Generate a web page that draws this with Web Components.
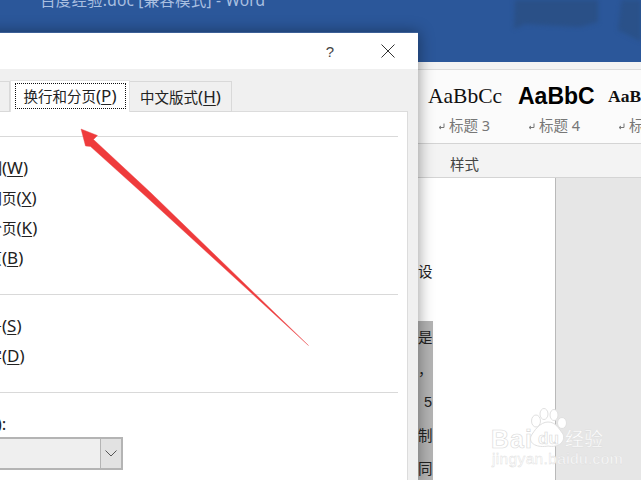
<!DOCTYPE html>
<html lang="zh">
<head>
<meta charset="utf-8">
<style>
html, body { margin: 0; padding: 0; width: 641px; height: 480px; overflow: hidden; background: #fff; }
body { position: relative; font-family: "Noto Sans", "Noto Sans CJK SC", sans-serif; }
</style>
</head>
<body>
<word-window>
	<title-bar>百度经验.doc [兼容模式] - Word</title-bar>
	<style-ribbon group="样式">
		<style-sample label="标题 3" kind="serif">AaBbCc</style-sample>
		<style-sample label="标题 4" kind="sans">AaBbC</style-sample>
		<style-sample label="标题 5" kind="small">AaB</style-sample>
	</style-ribbon>
	<doc-area></doc-area>
</word-window>
<para-dialog></para-dialog>
<red-arrow></red-arrow>
<baidu-mark></baidu-mark>

<script>
//#region HELPERS
function define(name, html, init) {
	window.customElements.define(
		name,
		class extends HTMLElement {
			constructor() {
				super();
				this.attachShadow({mode: "open"}).innerHTML = html;
				if (init) init(this);
			}
		}
	);
}
//#endregion HELPERS

//#region WINDOW
define("word-window", /* html */ `
<style>
:host { display: flex; flex-direction: column; width: 641px; height: 480px; }
</style>
<slot></slot>`);

define("title-bar", /* html */ `
<style>
:host {
	display: block;
	position: relative;
	flex: none;
	height: 62px;
	background: #2b579a;
	overflow: hidden;
	box-sizing: border-box;
	padding-left: 40px;
	color: #a9bfe0;
	font-size: 15.5px;
	line-height: 20px;
}
.text { position: relative; margin-top: -10px; white-space: nowrap; letter-spacing: .2px; }
svg { position: absolute; left: 0; top: 0; filter: blur(2px); }
</style>
<svg width="641" height="62">
	<path d="M515 -5H598V22L580 27L525 24L514 29Z" fill="#2a5087"/>
	<path d="M618 30L646 44V-5H622Z" fill="#2a5189"/>
</svg>
<div class="text"><slot></slot></div>`);

define("style-ribbon", /* html */ `
<style>
:host {
	display: block;
	flex: none;
	height: 116px;
	background: #f3f3f3;
	box-sizing: border-box;
	border-bottom: 1px solid #d4d4d4;
	padding-left: 418px;
	color: #444;
}
.top { height: 7px; border-bottom: 1px solid #dcdcdc; margin-left: -418px; }
.gallery {
	display: flex;
	height: 73px;
	background: #fbfbfb;
	border-bottom: 1px solid #d4d4d4;
	margin-left: -418px;
	padding-left: 418px;
	overflow: hidden;
}
.group { padding: 6px 0 0 32px; font-size: 14.5px; line-height: 28px; }
</style>
<div class="top"></div>
<div class="gallery"><slot></slot></div>
<div class="group"></div>`, (el) => {
	el.shadowRoot.querySelector(".group").textContent = el.getAttribute("group");
});

define("style-sample", /* html */ `
<style>
:host { display: block; flex: none; width: 90px; }
.sample {
	height: 39px;
	margin-top: 6px;
	padding-left: 10px;
	line-height: 40px;
	white-space: nowrap;
	color: #111;
	font-family: "Liberation Serif", serif;
	font-size: 21.5px;
}
:host([kind="sans"]) .sample { font-family: "Liberation Sans", sans-serif; font-weight: bold; font-size: 23px; color: #000; }
:host([kind="small"]) .sample { font-weight: bold; font-size: 17.5px; }
.label {
	display: flex;
	align-items: center;
	padding-left: 20px;
	font-size: 14.5px;
	line-height: 20px;
	color: #777;
	white-space: nowrap;
}
svg { margin-right: 4px; margin-top: 3px; flex: none; }
</style>
<div class="sample"><slot></slot></div>
<div class="label">
	<svg width="7" height="7" viewBox="0 0 7 7"><path d="M6 .5V4.5H1.5M3 3L1 4.5L3 6" fill="none" stroke="#777"/></svg>
	<span></span>
</div>`, (el) => {
	el.shadowRoot.querySelector("span").textContent = el.getAttribute("label");
});

define("doc-area", /* html */ `
<style>
:host { display: flex; flex: 1; background: #e6e6e6; min-height: 0; overflow: hidden; }
.page {
	width: 137px;
	margin-left: 418px;
	background: #fff;
	border-right: 1px solid #b9b9b9;
	padding-top: 77px;
	flex: none;
}
.line {
	width: 15px;
	height: 32.8px;
	line-height: 32.8px;
	font-family: "Noto Sans CJK SC", sans-serif;
	font-size: 14.5px;
	color: #222;
	white-space: nowrap;
	overflow: hidden;
}
.sel { background: #b4b4b4; }
.r { text-align: right; padding-right: 1px; width: 14px; font-family: "Liberation Sans", sans-serif; }
</style>
<div class="page">
	<div class="line">设</div>
	<div class="line"></div>
	<div class="line sel">是</div>
	<div class="line sel">，</div>
	<div class="line sel r">5</div>
	<div class="line sel">制</div>
	<div class="line sel">同</div>
</div>`);
//#endregion WINDOW

//#region DIALOG
define("para-dialog", /* html */ `
<style>
:host {
	display: block;
	position: absolute;
	left: -120px;
	top: 32px;
	width: 538px;
	height: 448px;
	background: #f0f0f0;
	box-shadow: 1px 0 14px rgba(0, 0, 0, .38);
	border-top: 1px solid #3b5f96;
	box-sizing: border-box;
	color: #222;
	font-size: 14.5px;
}
.head {
	display: flex;
	justify-content: flex-end;
	align-items: center;
	height: 36px;
	background: #fff;
	padding-right: 23px;
	gap: 47px;
	color: #444;
	font-size: 15px;
	font-family: "Liberation Sans", sans-serif;
}
.tabs { display: flex; align-items: flex-end; height: 31px; margin: 12px 0 -1px 20px; position: relative; }
.panel {
	margin: 0 10px 0 20px;
	height: 369px;
	background: #fff;
	border: 1px solid #dcdcdc;
	border-bottom: 0;
	padding: 24px 9px 0 0;
	box-sizing: border-box;
}
hr { border: 0; border-top: 1px solid #d9d9d9; margin: 0; }
.group { padding: 16px 0 21px 43px; }
.field { padding: 21px 0 0 27px; }
.field label { display: block; height: 20px; line-height: 20px; white-space: nowrap; margin-left: -5px; }
.m { font-size: 17px; line-height: 1; }
u { text-underline-offset: 2px; }
.select {
	display: flex;
	justify-content: flex-end;
	width: 195px;
	height: 33px;
	margin-top: 3px;
	box-sizing: border-box;
	background: #efefef;
	border: 2px solid #b4b4b4;
}
.select div {
	display: flex;
	align-items: center;
	justify-content: center;
	width: 20px;
	background: #e2e2e2;
	border-left: 1px solid #b4b4b4;
}
</style>
<div class="head">
	<span>?</span>
	<svg width="14" height="14" viewBox="0 0 14 14"><path d="M.5 .5L13.5 13.5M13.5 .5L.5 13.5" stroke="#333" fill="none"/></svg>
</div>
<div class="tabs">
	<dialog-tab style="width:110px"></dialog-tab>
	<dialog-tab active style="width:120px">换行和分页<span class="m">(<u>P</u>)</span></dialog-tab>
	<dialog-tab style="width:102px">中文版式<span class="m">(<u>H</u>)</span></dialog-tab>
</div>
<div class="panel">
	<hr>
	<div class="group">
		<check-row>孤行控制<span class="m">(<u>W</u>)</span></check-row>
		<check-row>与下段同页<span class="m">(<u>X</u>)</span></check-row>
		<check-row>段中不分页<span class="m">(<u>K</u>)</span></check-row>
		<check-row>段前分页<span class="m">(<u>B</u>)</span></check-row>
	</div>
	<hr>
	<div class="group">
		<check-row>取消行号<span class="m">(<u>S</u>)</span></check-row>
		<check-row>取消断字<span class="m">(<u>D</u>)</span></check-row>
	</div>
	<hr>
	<div class="field">
		<label>紧密环绕<span class="m">(<u>R</u>):</span></label>
		<div class="select"><div>
			<svg width="12" height="7" viewBox="0 0 12 7"><path d="M.5 .5L6 6L11.5 .5" fill="none" stroke="#555"/></svg>
		</div></div>
	</div>
</div>`);

define("dialog-tab", /* html */ `
<style>
:host {
	display: flex;
	align-items: center;
	justify-content: center;
	flex: none;
	box-sizing: border-box;
	height: 31px;
	background: #f0f0f0;
	border: 1px solid #d9d9d9;
	border-left-width: 0;
	white-space: nowrap;
}
:host([active]) {
	height: 32px;
	background: #fff;
	border: 1px solid #e2e2e2;
	border-bottom: 0;
	position: relative;
}
.focus { padding: 0 8px; }
:host([active]) .focus {
	box-sizing: border-box;
	width: 111px;
	height: 26px;
	line-height: 24px;
	text-align: center;
	padding: 0;
	margin-top: -2px;
	border: 1px dotted #111;
}
</style>
<div class="focus"><slot></slot></div>`);

define("check-row", /* html */ `
<style>
:host { display: block; height: 30px; line-height: 30px; white-space: nowrap; }
</style>
<slot></slot>`);
//#endregion DIALOG

//#region OVERLAYS
define("red-arrow", /* html */ `
<style>
:host { position: absolute; left: 70px; top: 120px; width: 250px; height: 240px; display: block; }
</style>
<svg width="250" height="240" viewBox="70 120 250 240">
	<path d="M81 129L97.500 135.500L93.500 139.500L150 192L308.500 345.500L146 196.500L90.500 146.500L85.500 146Z" fill="#ef3b3c" stroke="#e8474a" stroke-width=".4" stroke-linejoin="round"/>
</svg>`);

define("baidu-mark", /* html */ `
<style>
:host {
	position: absolute;
	left: 488px;
	top: 406px;
	width: 125px;
	height: 62px;
	display: block;
	font-family: "Liberation Sans", sans-serif;
	color: #fff;
	-webkit-text-stroke: .6px #d8d8d8;
}
span { position: absolute; white-space: nowrap; }
.bai { left: 3px; top: 23px; font-size: 25px; line-height: 20px; font-weight: bold; letter-spacing: 1px; }
.du { left: 50px; top: 24px; font-size: 17px; line-height: 18px; font-weight: bold; }
.jy { left: 77px; top: 21px; font-size: 19px; line-height: 22px; font-family: "Noto Sans CJK SC", sans-serif; -webkit-text-stroke: .3px #d8d8d8; }
.url { left: 4px; top: 44px; font-size: 15.5px; line-height: 18px; -webkit-text-stroke: .4px #dcdcdc; letter-spacing: .35px; }
svg { position: absolute; left: 0; top: 0; }
</style>
<svg width="125" height="62" fill="#fff" stroke="#e0e0e0">
	<ellipse cx="48" cy="15" rx="4.500" ry="6"/>
	<ellipse cx="56" cy="8" rx="4" ry="5.500"/>
	<ellipse cx="66" cy="9" rx="4" ry="5.500"/>
	<ellipse cx="74" cy="17" rx="4.500" ry="5.500"/>
	<path d="M60 16C52 16 46 25 43 30C40 38 50 42 60 40C70 42 78 36 75 28C71 23 68 16 60 16Z"/>
</svg>
<span class="bai">Bai</span>
<span class="du">du</span>
<span class="jy">经验</span>
<span class="url">jingyan.baidu.com</span>`);
//#endregion OVERLAYS
</script>
</body>
</html>
